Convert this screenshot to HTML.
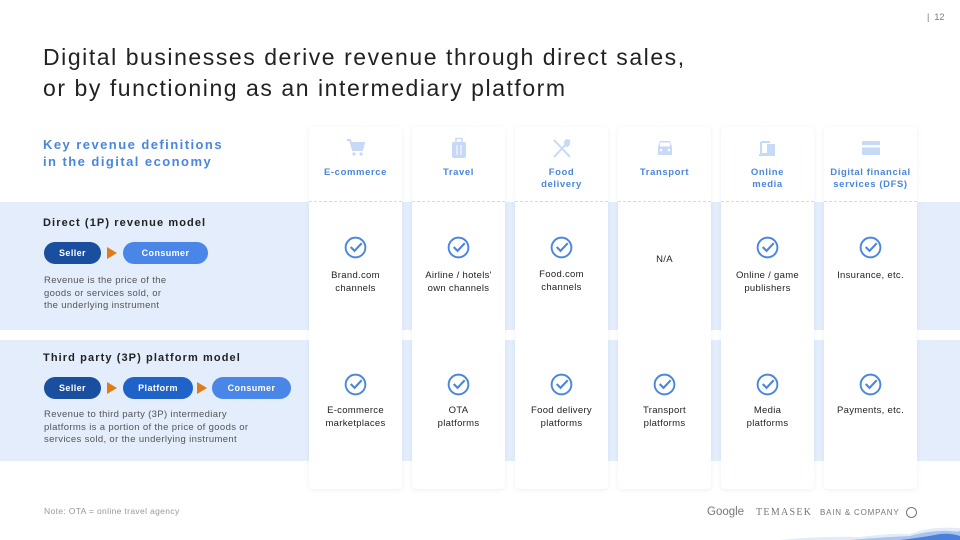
<!DOCTYPE html>
<html><head><meta charset="utf-8"><style>
*{margin:0;padding:0;box-sizing:border-box}
body{width:960px;height:540px;background:#fff;font-family:"Liberation Sans",sans-serif;position:relative;overflow:hidden}
.abs{position:absolute}
.band{position:absolute;left:0;width:960px;background:#e3edfb}
.card{position:absolute;top:127px;width:93px;height:362px;background:#fff;border-radius:4px;box-shadow:0 1px 4px rgba(120,150,200,.15)}
.hd{position:absolute;top:0;left:0;width:93px;height:75px;border-bottom:1px dashed #cfdcf0}
.ic{position:absolute;left:36px;top:10px;width:22px;height:22px}
.lab{position:absolute;left:0;width:93px;text-align:center;color:#4a86dd;font-size:9.5px;font-weight:bold;letter-spacing:.6px;line-height:12px}
.ck{position:absolute;left:35px;width:23px;height:23px}
.tx{position:absolute;left:-5px;width:103px;text-align:center;font-size:9.5px;color:#222;line-height:13px;letter-spacing:.3px}
.pill{position:absolute;height:22px;border-radius:11px;color:#fff;font-size:9px;font-weight:bold;text-align:center;line-height:22px;letter-spacing:.4px}
.arr{position:absolute;width:0;height:0;border-left:10px solid #e07b17;border-top:6px solid transparent;border-bottom:6px solid transparent}
.desc{position:absolute;left:44px;font-size:9.5px;color:#555;line-height:12.5px;letter-spacing:.35px}
</style></head><body>
<div class="abs" style="left:927px;top:12px;font-size:9px;color:#777">|&nbsp;&nbsp;12</div>
<div class="abs" style="left:43px;top:42px;font-size:23px;color:#222;line-height:31px;letter-spacing:1.55px">Digital businesses derive revenue through direct sales,<br>or by functioning as an intermediary platform</div>
<div class="abs" style="left:43px;top:136px;font-size:13px;font-weight:bold;color:#4a86dd;line-height:17px;letter-spacing:1.45px">Key revenue definitions<br>in the digital economy</div>
<div class="band" style="top:202px;height:128px"></div>
<div class="band" style="top:340px;height:121px"></div>
<div class="abs" style="left:43px;top:217px;font-size:11px;font-weight:bold;color:#222;letter-spacing:1.1px">Direct (1P) revenue model</div>
<div class="pill" style="left:44px;top:242px;width:57px;background:#1a4fa0">Seller</div>
<div class="arr" style="left:107px;top:247px"></div>
<div class="pill" style="left:123px;top:242px;width:85px;background:#4a86e8">Consumer</div>
<div class="desc" style="top:275px">Revenue is the price of the<br>goods or services sold, or<br>the underlying instrument</div>
<div class="abs" style="left:43px;top:352px;font-size:11px;font-weight:bold;color:#222;letter-spacing:1.1px">Third party (3P) platform model</div>
<div class="pill" style="left:44px;top:377px;width:57px;background:#1a4fa0">Seller</div>
<div class="arr" style="left:107px;top:382px"></div>
<div class="pill" style="left:123px;top:377px;width:70px;background:#1f63c9">Platform</div>
<div class="arr" style="left:197px;top:382px"></div>
<div class="pill" style="left:212px;top:377px;width:79px;background:#4a86e8">Consumer</div>
<div class="desc" style="top:409px">Revenue to third party (3P) intermediary<br>platforms is a portion of the price of goods or<br>services sold, or the underlying instrument</div>

<svg width="0" height="0" style="position:absolute"><defs>
<symbol id="ck" viewBox="0 0 24 24"><circle cx="12" cy="12" r="10.3" fill="none" stroke="#4a86dd" stroke-width="2"/><path d="M7 11.5l4 4 7.5-8" fill="none" stroke="#4a86dd" stroke-width="2.2"/></symbol>
</defs></svg>

<div class="card" style="left:309px"><div class="hd"></div>
<svg class="ic" viewBox="0 0 22 22"><path d="M2 3h3l3 10h9l2-7H6" fill="none" stroke="#c6d9f6" stroke-width="2"/><rect x="7" y="6" width="11" height="6" fill="#c6d9f6"/><circle cx="9" cy="17" r="1.6" fill="#c6d9f6"/><circle cx="16" cy="17" r="1.6" fill="#c6d9f6"/></svg>
<div class="lab" style="top:40px">E-commerce</div>
<svg class="ck" style="top:109px"><use href="#ck"/></svg><div class="tx" style="top:142px">Brand.com<br>channels</div>
<svg class="ck" style="top:246px"><use href="#ck"/></svg><div class="tx" style="top:277px">E-commerce<br>marketplaces</div></div>

<div class="card" style="left:412px"><div class="hd"></div>
<svg class="ic" viewBox="0 0 22 22"><rect x="4" y="5" width="14" height="16" rx="2" fill="#c6d9f6"/><rect x="8" y="1.5" width="6" height="4" fill="none" stroke="#c6d9f6" stroke-width="1.5"/><path d="M9 8v10M13 8v10" stroke="#fff" stroke-width="1"/></svg>
<div class="lab" style="top:40px">Travel</div>
<svg class="ck" style="top:109px"><use href="#ck"/></svg><div class="tx" style="top:142px">Airline / hotels'<br>own channels</div>
<svg class="ck" style="top:246px"><use href="#ck"/></svg><div class="tx" style="top:277px">OTA<br>platforms</div></div>

<div class="card" style="left:515px"><div class="hd"></div>
<svg class="ic" viewBox="0 0 22 22"><path d="M3 3l16 17M19 3L3 20" stroke="#c6d9f6" stroke-width="2"/><ellipse cx="16" cy="6" rx="3" ry="4" fill="#c6d9f6"/></svg>
<div class="lab" style="top:40px">Food<br>delivery</div>
<svg class="ck" style="top:109px"><use href="#ck"/></svg><div class="tx" style="top:141px">Food.com<br>channels</div>
<svg class="ck" style="top:246px"><use href="#ck"/></svg><div class="tx" style="top:277px">Food delivery<br>platforms</div></div>

<div class="card" style="left:618px"><div class="hd"></div>
<svg class="ic" viewBox="0 0 22 22"><path d="M4 10l2-6h10l2 6v8H4z" fill="#c6d9f6"/><rect x="6" y="5.5" width="10" height="4" fill="#fff"/><circle cx="7" cy="13" r="1.3" fill="#fff"/><circle cx="15" cy="13" r="1.3" fill="#fff"/></svg>
<div class="lab" style="top:40px">Transport</div>
<div class="tx" style="top:126px">N/A</div>
<svg class="ck" style="top:246px"><use href="#ck"/></svg><div class="tx" style="top:277px">Transport<br>platforms</div></div>

<div class="card" style="left:721px"><div class="hd"></div>
<svg class="ic" viewBox="0 0 22 22"><path d="M4 5h9M4 5v12h6" fill="none" stroke="#c6d9f6" stroke-width="2"/><rect x="10" y="7" width="8" height="12" fill="#c6d9f6"/><rect x="2" y="17" width="9" height="2" fill="#c6d9f6"/></svg>
<div class="lab" style="top:40px">Online<br>media</div>
<svg class="ck" style="top:109px"><use href="#ck"/></svg><div class="tx" style="top:142px">Online / game<br>publishers</div>
<svg class="ck" style="top:246px"><use href="#ck"/></svg><div class="tx" style="top:277px">Media<br>platforms</div></div>

<div class="card" style="left:824px"><div class="hd"></div>
<svg class="ic" viewBox="0 0 22 22"><rect x="2" y="4" width="18" height="14" rx="1" fill="#c6d9f6"/><rect x="2" y="8" width="18" height="2.5" fill="#fff"/></svg>
<div class="lab" style="top:40px">Digital financial<br>services (DFS)</div>
<svg class="ck" style="top:109px"><use href="#ck"/></svg><div class="tx" style="top:142px">Insurance, etc.</div>
<svg class="ck" style="top:246px"><use href="#ck"/></svg><div class="tx" style="top:277px">Payments, etc.</div></div>

<div class="abs" style="left:44px;top:506px;font-size:8.5px;color:#999;letter-spacing:.35px">Note: OTA = online travel agency</div>
<div class="abs" style="left:707px;top:506px;font-size:11.5px;color:#777">Google</div>
<div class="abs" style="left:756px;top:507px;font-size:10px;color:#777;font-family:'Liberation Serif',serif;letter-spacing:1.3px">TEMASEK</div>
<div class="abs" style="left:820px;top:508px;font-size:8px;color:#777;letter-spacing:.8px">BAIN &amp; COMPANY</div>
<div class="abs" style="left:906px;top:507px;width:11px;height:11px;border:1px solid #777;border-radius:50%"></div>
<svg class="abs" style="left:760px;top:518px" width="200" height="22" viewBox="0 0 200 22"><path d="M20 22 Q60 18 100 19 Q130 15 150 16 Q170 8 200 10 V22Z" fill="#e2ebf8"/><path d="M90 22 Q125 19 150 18 Q170 12 190 13 Q196 14 200 13 V22Z" fill="#a9c4ee"/><path d="M140 22 Q165 19 180 16 Q192 15 200 18 V22Z" fill="#4a80da"/></svg>
</body></html>
